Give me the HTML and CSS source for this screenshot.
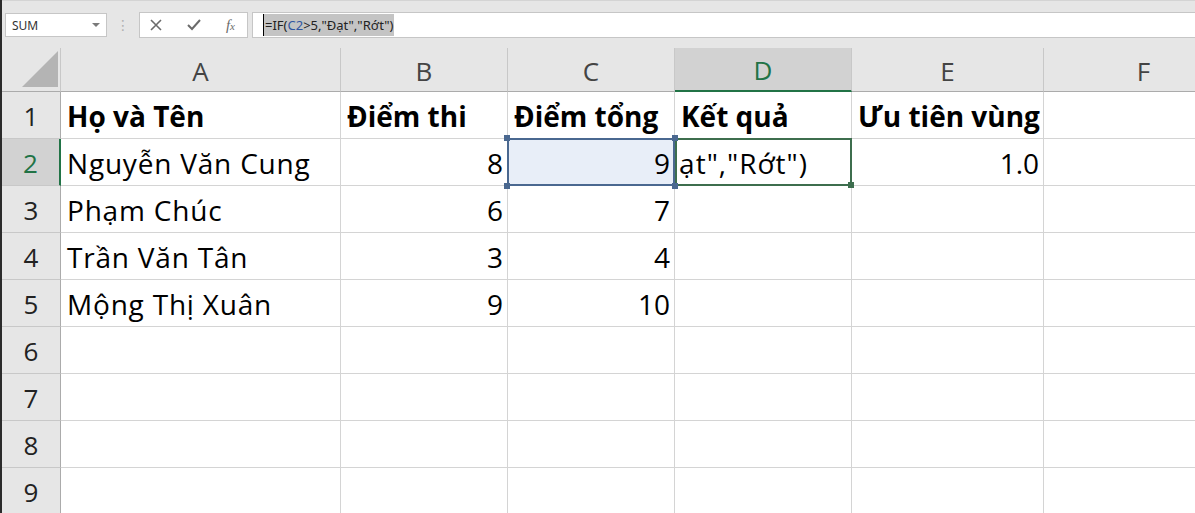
FILE: index.html
```html
<!DOCTYPE html>
<html lang="vi">
<head>
    <meta charset="UTF-8">
    <meta name="viewport" content="width=device-width, initial-scale=1.0">
    <title>Bảng điểm</title>
    <link rel="stylesheet" href="styles.css">
</head>
<body>
<div class="app">

    <div class="toolbar">
        <div class="namebox">
            <span>SUM</span>
            <span class="dropdown"></span>
        </div>
        <div class="grip">⋮</div>
        <div class="fbuttons">
            <svg class="ico" width="14" height="14" viewBox="0 0 14 14"><path d="M2 2 L12 12 M12 2 L2 12" stroke="#6b6b6b" stroke-width="1.6" fill="none"/></svg>
            <svg class="ico" width="16" height="14" viewBox="0 0 16 14"><path d="M2 7 L6 11 L14 2" stroke="#6b6b6b" stroke-width="2" fill="none"/></svg>
            <span class="fx"><i>f</i><small>x</small></span>
        </div>
        <div class="formula">
            <span class="selected">=IF(<span class="ref">C2</span>&gt;5,"Đạt","Rớt")</span>
        </div>
    </div>

    <div class="sheet">
        <!-- column headers -->
        <div class="corner"><span class="tri"></span></div>
        <div class="colhead">A</div>
        <div class="colhead">B</div>
        <div class="colhead">C</div>
        <div class="colhead active">D</div>
        <div class="colhead">E</div>
        <div class="colhead">F</div>

        <!-- row 1 -->
        <div class="rowhead">1</div>
        <div class="cell bold">Họ và Tên</div>
        <div class="cell bold">Điểm thi</div>
        <div class="cell bold">Điểm tổng</div>
        <div class="cell bold">Kết quả</div>
        <div class="cell bold">Ưu tiên vùng</div>
        <div class="cell"></div>

        <!-- row 2 -->
        <div class="rowhead active">2</div>
        <div class="cell">Nguyễn Văn Cung</div>
        <div class="cell num">8</div>
        <div class="cell num range">9
            <span class="handle tl"></span><span class="handle tr"></span>
            <span class="handle bl"></span><span class="handle br"></span>
        </div>
        <div class="cell editing">
            <div class="edit-clip"><span class="edit-text">=IF(C2&gt;5,"Đạt","Rớt")</span></div>
            <span class="fill"></span>
        </div>
        <div class="cell num">1.0</div>
        <div class="cell"></div>

        <!-- row 3 -->
        <div class="rowhead">3</div>
        <div class="cell">Phạm Chúc</div>
        <div class="cell num">6</div>
        <div class="cell num">7</div>
        <div class="cell"></div>
        <div class="cell"></div>
        <div class="cell"></div>

        <!-- row 4 -->
        <div class="rowhead">4</div>
        <div class="cell">Trần Văn Tân</div>
        <div class="cell num">3</div>
        <div class="cell num">4</div>
        <div class="cell"></div>
        <div class="cell"></div>
        <div class="cell"></div>

        <!-- row 5 -->
        <div class="rowhead">5</div>
        <div class="cell">Mộng Thị Xuân</div>
        <div class="cell num">9</div>
        <div class="cell num">10</div>
        <div class="cell"></div>
        <div class="cell"></div>
        <div class="cell"></div>

        <!-- empty rows -->
        <div class="rowhead">6</div>
        <div class="cell"></div><div class="cell"></div><div class="cell"></div><div class="cell"></div><div class="cell"></div><div class="cell"></div>
        <div class="rowhead">7</div>
        <div class="cell"></div><div class="cell"></div><div class="cell"></div><div class="cell"></div><div class="cell"></div><div class="cell"></div>
        <div class="rowhead">8</div>
        <div class="cell"></div><div class="cell"></div><div class="cell"></div><div class="cell"></div><div class="cell"></div><div class="cell"></div>
        <div class="rowhead">9</div>
        <div class="cell"></div><div class="cell"></div><div class="cell"></div><div class="cell"></div><div class="cell"></div><div class="cell"></div>
    </div>

</div>
</body>
</html>
```

FILE: styles.css
```css
* {
    margin: 0;
    padding: 0;
    box-sizing: border-box;
}
body {
    width: 1195px;
    height: 513px;
    overflow: hidden;
    background: #e6e6e6;
    font-family: 'Open Sans', 'Noto Sans', sans-serif;
}
.app {
    border-left: 2px solid #2b2b2b;
    height: 513px;
    overflow: hidden;
}

/* formula bar */
.toolbar {
    height: 48px;
    border-top: 1px solid #d4d4d4;
    padding-top: 11px;
    display: flex;
    align-items: flex-start;
    font-family: 'Noto Sans', 'DejaVu Sans', sans-serif;
    font-size: 12px;
    color: #333;
}
.namebox {
    width: 102px;
    height: 24px;
    margin-left: 3px;
    margin-top: 1px;
    background: #fff;
    border: 1px solid #c6c6c6;
    display: flex;
    align-items: center;
    justify-content: space-between;
    padding: 0 6px 0 6px;
}
.dropdown {
    width: 0;
    height: 0;
    border-left: 4px solid transparent;
    border-right: 4px solid transparent;
    border-top: 4px solid #7a7a7a;
}
.grip {
    width: 32px;
    text-align: center;
    color: #b0b0b0;
    font-size: 14px;
    line-height: 26px;
}
.fbuttons {
    width: 109px;
    height: 26px;
    background: #fff;
    border: 1px solid #c6c6c6;
    display: flex;
    align-items: center;
    justify-content: space-between;
    padding: 0 12px 0 9px;
}
.fx {
    font-family: 'Liberation Serif', serif;
    color: #6b6b6b;
    font-size: 15px;
}
.fx small {
    font-size: 11px;
    font-style: italic;
}
.formula {
    flex: 1;
    margin-left: 4px;
    height: 26px;
    background: #fff;
    border: 1px solid #c6c6c6;
    border-right: none;
    display: flex;
    align-items: center;
    padding-left: 10px;
    font-size: 13px;
}
.selected {
    background: #c4c4c4;
    color: #222;
    padding: 2px 1px;
    border-left: 1px solid #000;
}
.ref {
    color: #2f55a0;
}

/* grid */
.sheet {
    display: grid;
    grid-template-columns: 59px 280px 167px 167px 177px 192px 200px;
    grid-template-rows: 44px repeat(9, 47px);
    background: #fff;
    font-size: 26px;
    color: #000;
}
.corner {
    background: #e6e6e6;
    border-right: 1px solid #c8c8c8;
    border-bottom: 1px solid #ababab;
    position: relative;
}
.tri {
    position: absolute;
    right: 2px;
    bottom: 4px;
    width: 0;
    height: 0;
    border-left: 36px solid transparent;
    border-bottom: 36px solid #b4b4b4;
}
.colhead {
    background: #e6e6e6;
    border-right: 1px solid #c8c8c8;
    border-bottom: 1px solid #ababab;
    color: #444;
    display: flex;
    align-items: center;
    justify-content: center;
    padding-top: 2px;
}
.colhead.active {
    background: #d2d2d2;
    color: #217346;
    border-bottom: 2px solid #217346;
}
.rowhead {
    background: #e6e6e6;
    border-right: 1px solid #ababab;
    border-bottom: 1px solid #c8c8c8;
    color: #222;
    display: flex;
    align-items: center;
    justify-content: center;
    padding-top: 2px;
}
.rowhead.active {
    background: #d2d2d2;
    color: #217346;
    border-right: 2px solid #217346;
}
.cell {
    border-right: 1px solid #d4d4d4;
    border-bottom: 1px solid #d4d4d4;
    display: flex;
    align-items: center;
    padding: 2px 6px 0 6px;
    white-space: nowrap;
    position: relative;
    font-size: 28px;
    letter-spacing: 0.8px;
}
.bold {
    font-weight: bold;
    letter-spacing: 0;
}
.num {
    justify-content: flex-end;
    padding-right: 4px;
    letter-spacing: 0;
}
.range {
    background: #e8eef8;
}
.range::after {
    content: "";
    position: absolute;
    left: -1px;
    top: -1px;
    right: -1px;
    bottom: -1px;
    border: 2px solid #4a6890;
}
.handle {
    position: absolute;
    width: 6px;
    height: 6px;
    background: #4a6890;
    z-index: 2;
}
.tl { left: -4px; top: -4px; }
.tr { right: -4px; top: -4px; }
.bl { left: -4px; bottom: -4px; }
.br { right: -4px; bottom: -4px; }
.editing {
    padding: 2px 43px 0 3px;
    letter-spacing: 1px;
}
.edit-clip {
    flex: 1;
    overflow: hidden;
    display: flex;
    justify-content: flex-end;
}
.edit-text {
    flex-shrink: 0;
}
.editing::after {
    content: "";
    position: absolute;
    left: 0;
    top: -1px;
    right: -1px;
    bottom: -1px;
    border: 2px solid #3d6e4e;
}
.fill {
    position: absolute;
    right: -3px;
    bottom: -3px;
    width: 6px;
    height: 6px;
    background: #3d6e4e;
    z-index: 2;
}
```
